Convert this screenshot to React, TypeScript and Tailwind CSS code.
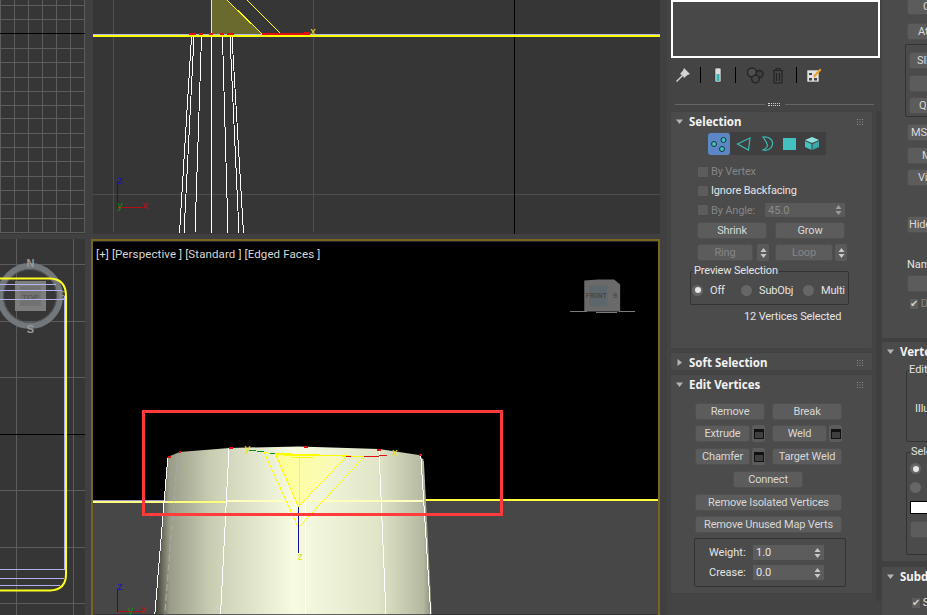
import React from 'react';

const uiFont = { fontFamily: 'Roboto, "Noto Sans", sans-serif' };

const Btn = ({ label, className = '', dim = false }: { label?: string; className?: string; dim?: boolean }) => (
  <div
    className={`flex h-[17px] shrink-0 items-center justify-center overflow-hidden rounded-[3px] border border-[#505050] bg-[#5c5c5c] text-[11px] leading-none tracking-[-0.15px] whitespace-nowrap ${
      dim ? 'text-[#858585]' : 'text-[#d8d8d8]'
    } ${className}`}
  >
    {label}
  </div>
);

const Caddy = () => (
  <div className="flex h-[17px] w-[13px] shrink-0 items-center justify-center rounded-[2px] bg-[#5c5c5c]">
    <div className="h-[10px] w-[10px] border border-t-[3px] border-[#111] bg-[#3f3f3f]" />
  </div>
);

const Arrows = ({ className = '' }: { className?: string }) => (
  <svg width="7" height="12" viewBox="0 0 7 12" className={className}>
    <path d="M3.5 1 L6.5 5 L.5 5 Z M3.5 11 L6.5 7 L.5 7 Z" fill="#c8c8c8" />
  </svg>
);

const Check = ({ label, dim, checked, className = '' }: { label: string; dim?: boolean; checked?: boolean; className?: string }) => (
  <div className={`flex h-[13px] items-center gap-[2px] text-[11px] leading-none tracking-[-0.15px] ${dim ? 'text-[#858585]' : 'text-[#e4e4e4]'} ${className}`}>
    <div className="flex h-[12px] w-[12px] items-center justify-center border border-[#4a4a4a] bg-[#5c5c5c]">
      {checked && <span className="text-[10px] leading-none text-[#cfcfcf]">✔</span>}
    </div>
    <span className="whitespace-nowrap">{label}</span>
  </div>
);

const Radio = ({ label, on, className = '' }: { label?: string; on?: boolean; className?: string }) => (
  <div className={`flex items-center gap-[2px] text-[11px] leading-none tracking-[-0.15px] text-[#e4e4e4] ${className}`}>
    <div className="flex h-[11px] w-[11px] items-center justify-center rounded-full bg-[#666]">
      {on && <div className="h-[6px] w-[6px] rounded-full bg-[#e8e8e8]" />}
    </div>
    {label && <span className="ml-[5px] whitespace-nowrap">{label}</span>}
  </div>
);

const Grip = () => (
  <svg width="6" height="6" viewBox="0 0 6 6" className="mr-[9px] ml-auto">
    {[0, 2.5, 5].map((x) =>
      [0, 2.5, 5].map((y) => <rect key={`${x}${y}`} x={x} y={y} width="1" height="1" fill="#8c8c8c" />),
    )}
  </svg>
);

const RolloutHead = ({ title, open = true, className = '' }: { title: string; open?: boolean; className?: string }) => (
  <div className={`flex h-[20px] items-center pl-[5px] ${className}`}>
    <svg width="8" height="8" viewBox="0 0 8 8" className="mr-[5px] shrink-0">
      {open ? <path d="M0 1.5 H7 L3.5 6 Z" fill="#b4b4b4" /> : <path d="M1.5 0 V7 L6 3.5 Z" fill="#b4b4b4" />}
    </svg>
    <span className="font-['Noto_Sans'] text-[11.5px] leading-none font-bold whitespace-nowrap text-[#f2f2f2]">{title}</span>
    <Grip />
  </div>
);

const Rollout = ({ children, className = '' }: { children: React.ReactNode; className?: string }) => (
  <div className={`shrink-0 rounded-[2px] border border-[#424242] bg-[#4b4b4b] ${className}`}>{children}</div>
);

const SubObjectIcons = () => (
  <div className="ml-[37px] flex h-[23px] w-[120px] items-center">
    <div className="flex h-[22px] w-[22px] items-center justify-center rounded-[3px] bg-[#5b87c5]">
      <svg width="18" height="16" viewBox="0 0 18 16">
        <circle cx="4" cy="8" r="2.5" fill="#43c0c0" stroke="#17333a" />
        <circle cx="13.5" cy="4" r="2.5" fill="#43c0c0" stroke="#17333a" />
        <circle cx="12" cy="13" r="2.5" fill="#43c0c0" stroke="#17333a" />
      </svg>
    </div>
    <div className="flex h-[23px] w-[96px] items-center justify-around bg-[#3f3f3f] px-[2px]">
      <svg width="16" height="14" viewBox="0 0 16 14" fill="none" stroke="#3db8b8" strokeWidth="1.2">
        <path d="M1.5 7 L14 1 L12.5 13 Z" />
      </svg>
      <svg width="14" height="15" viewBox="0 0 14 15" fill="none" stroke="#3db8b8" strokeWidth="1.2">
        <path d="M3 1 C10 0 14 5 12 10 C11 13 7 15 3 14 C7 12 8 10 7 8 C6.500 6 5 4 3 1 Z" />
      </svg>
      <div className="h-[12px] w-[13px] bg-[#43c0c0]" />
      <svg width="16" height="15" viewBox="0 0 16 15">
        <path d="M8 1 L15 4 L8 7 L1 4 Z" fill="#8fe0e0" />
        <path d="M1 5 L7.500 8 V14 L1 11 Z" fill="#43c0c0" />
        <path d="M15 5 L8.500 8 V14 L15 11 Z" fill="#3aa8a8" />
      </svg>
    </div>
  </div>
);

const CommandPanel = () => (
  <div className="flex h-full w-[214px] shrink-0 flex-col overflow-hidden bg-[#444444] pl-[3px]" style={uiFont}>
    <div className="ml-[1px] h-[58px] w-[209px] shrink-0 border-2 border-white bg-[#484848]" />
    <div className="mt-[7px] flex h-[20px] items-center">
      {/* pin */}
      <svg width="16" height="16" viewBox="0 0 16 16" className="ml-[5px]">
        <path d="M9 1 L15 7 L12.500 8 L9 11 L8 9 L2 15 L1 14 L7 8 L5 7 L8 3.500 Z" fill="#d4d4d4" />
      </svg>
      <div className="ml-[9px] h-[16px] w-[1px] bg-black" />
      <svg width="10" height="16" viewBox="0 0 10 16" className="ml-[12px]">
        <rect x="2" y="1" width="6" height="14" rx="1" fill="#dcdcdc" stroke="#333" strokeWidth=".6" />
        <rect x="3.500" y="7" width="3" height="7" fill="#33b5b5" />
      </svg>
      <div className="ml-[12px] h-[16px] w-[1px] bg-black" />
      <svg width="18" height="17" viewBox="0 0 18 17" fill="none" stroke="#232323" strokeWidth="1.3" className="ml-[10px]">
        <circle cx="6" cy="5.500" r="4.500" fill="#4f4f4f" />
        <circle cx="13.500" cy="7" r="3.500" fill="#3f3f3f" />
        <circle cx="9.500" cy="12" r="3.800" fill="#444" />
      </svg>
      <svg width="12" height="17" viewBox="0 0 12 17" fill="none" stroke="#222" strokeWidth="1.1" className="ml-[8px]">
        <path d="M1 3.500 H11 M4 3 V1.500 H8 V3 M2 4 V16 H10 V4 M4.500 6 V14 M7.500 6 V14" />
      </svg>
      <div className="ml-[12px] h-[16px] w-[1px] bg-black" />
      <svg width="16" height="16" viewBox="0 0 16 16" className="ml-[9px]">
        <rect x="1" y="3" width="12" height="12" fill="#e2e2e2" stroke="#444" strokeWidth=".6" />
        <path d="M3 6 H6 V8 H3 Z M8 11 H11 V13.500 H8 Z M3 11 H6 V13.500 H3 Z" fill="#444" />
        <path d="M7 9 L14 1.500 L15.500 3 L8.500 10.500 Z" fill="#f0a020" />
      </svg>
    </div>
    <div className="mt-[18px] flex h-[3px] items-center">
      <div className="ml-[5px] h-px w-[90px] bg-[#666]" />
      <div className="mx-[3px] h-[3px] w-[12px] border-y border-dotted border-[#cfcfcf]" />
      <div className="ml-[2px] h-px w-[89px] bg-[#666]" />
    </div>
    <div className="flex min-h-0 flex-1">
      <div className="w-[203px] shrink-0">
        <Rollout className="mt-[5px] h-[238px]">
          <RolloutHead title="Selection" />
          <SubObjectIcons />
          <Check label="By Vertex" dim className="mt-[10px] ml-[26px]" />
          <Check label="Ignore Backfacing" className="mt-[6px] ml-[26px]" />
          <div className="mt-[6px] ml-[26px] flex items-center">
            <Check label="By Angle:" dim className="w-[68px]" />
            <div className="flex h-[14px] w-[80px] items-center justify-between rounded-[1px] bg-[#5a5a5a] px-[3px] text-[11px] leading-none text-[#8a8a8a]">
              45.0
              <Arrows className="opacity-60" />
            </div>
          </div>
          <div className="mt-[5px] ml-[26px] flex gap-[8px]">
            <Btn label="Shrink" className="w-[70px]" />
            <Btn label="Grow" className="w-[70px]" />
          </div>
          <div className="mt-[5px] ml-[26px] flex">
            <Btn label="Ring" dim className="w-[56px]" />
            <div className="ml-[4px] flex h-[17px] w-[12px] items-center justify-center rounded-[2px] bg-[#5a5a5a]"><Arrows /></div>
            <Btn label="Loop" dim className="ml-[6px] w-[58px]" />
            <div className="ml-[2px] flex h-[17px] w-[12px] items-center justify-center rounded-[2px] bg-[#5a5a5a]"><Arrows /></div>
          </div>
          <div className="relative mt-[10px] ml-[19px] h-[34px] w-[159px] rounded-[2px] border border-[#333]">
            <span className="absolute -top-[8px] left-[2px] bg-[#4b4b4b] px-[1px] text-[11px] leading-[14px] tracking-[-0.15px] whitespace-nowrap text-[#e4e4e4]">
              Preview Selection
            </span>
            <div className="flex h-full items-center pt-[4px]">
              <Radio label="Off" on className="ml-[1px] w-[49px]" />
              <Radio label="SubObj" className="w-[62px]" />
              <Radio label="Multi" />
            </div>
          </div>
          <div className="mt-[5px] ml-[73px] text-[11px] leading-[14px] tracking-[-0.15px] whitespace-nowrap text-[#e4e4e4]">12 Vertices Selected</div>
        </Rollout>
        <Rollout className="mt-[3px] h-[19px]">
          <RolloutHead title="Soft Selection" open={false} className="h-[17px]" />
        </Rollout>
        <Rollout className="mt-[3px] h-[220px]">
          <RolloutHead title="Edit Vertices" />
          <div className="mt-[8px] ml-[24px] flex gap-[7px]">
            <Btn label="Remove" className="w-[70px]" />
            <Btn label="Break" className="w-[70px]" />
          </div>
          <div className="mt-[5px] ml-[24px] flex">
            <Btn label="Extrude" className="w-[55px]" />
            <div className="ml-[2px]"><Caddy /></div>
            <Btn label="Weld" className="ml-[7px] w-[55px]" />
            <div className="ml-[2px]"><Caddy /></div>
          </div>
          <div className="mt-[6px] ml-[24px] flex">
            <Btn label="Chamfer" className="w-[55px]" />
            <div className="ml-[2px]"><Caddy /></div>
            <Btn label="Target Weld" className="ml-[7px] w-[70px]" />
          </div>
          <Btn label="Connect" className="mt-[6px] ml-[62px] w-[70px]" />
          <Btn label="Remove Isolated Vertices" className="mt-[6px] ml-[24px] w-[147px]" />
          <Btn label="Remove Unused Map Verts" className="mt-[5px] ml-[24px] w-[147px]" />
          <div className="mt-[5px] ml-[23px] h-[49px] w-[152px] rounded-[2px] border border-[#333] pt-[6px]">
            <div className="flex h-[15px] items-center text-[11px] leading-none text-[#e4e4e4]">
              <span className="ml-[14px] w-[44px]">Weight:</span>
              <div className="flex h-[15px] w-[71px] items-center justify-between bg-[#5c5c5c] px-[3px]">1.0<Arrows /></div>
            </div>
            <div className="mt-[5px] flex h-[15px] items-center text-[11px] leading-none text-[#e4e4e4]">
              <span className="ml-[14px] w-[44px]">Crease:</span>
              <div className="flex h-[15px] w-[71px] items-center justify-between bg-[#5c5c5c] px-[3px]">0.0<Arrows /></div>
            </div>
          </div>
        </Rollout>
      </div>
      <div className="mt-[5px] ml-[3px] h-[490px] w-[5px] bg-[#3f3f3f]" />
    </div>
  </div>
);

const RightPanel = () => (
  <div className="flex h-full min-w-0 flex-1 flex-col overflow-hidden bg-[#404040] pl-[1px] whitespace-nowrap" style={uiFont}>
    <div className="h-[338px] shrink-0 bg-[#4b4b4b] pl-[25px]">
      <Btn label="C" className="-mt-[2px] w-[40px] !justify-start pl-[15px]" />
      <Btn label="At" className="mt-[8px] w-[40px] !justify-start pl-[10px]" />
      <div className="mt-[4px] -ml-[2px] h-[73px] w-[40px] rounded-[2px] border border-[#333] pl-[3px]">
        <Btn label="Sli" className="mt-[7px] w-[40px] !justify-start pl-[7px]" />
        <Btn className="mt-[6px] w-[40px]" />
        <Btn label="Q" className="mt-[5px] w-[40px] !justify-start pl-[9px]" />
      </div>
      <Btn label="MSm" className="mt-[7px] w-[40px] !justify-start pl-[3px]" />
      <Btn label="M" className="mt-[6px] w-[40px] !justify-start pl-[14px]" />
      <Btn label="Vi" className="mt-[5px] w-[40px] !justify-start pl-[10px]" />
      <Btn label="Hide" className="mt-[30px] w-[40px] !justify-start pl-[1px]" />
      <div className="mt-[25px] text-[11px] leading-[14px] text-[#e4e4e4]">Nam</div>
      <Btn className="mt-[3px] w-[40px]" />
      <Check label="D" dim checked className="mt-[5px] ml-[2px]" />
    </div>
    <Rollout className="mt-[4px] h-[219px] !border-0">
      <RolloutHead title="Vertex Properties" />
      <div className="relative mt-[8px] ml-[24px] h-[72px] w-[40px] rounded-[2px] border border-[#333]">
        <span className="absolute -top-[8px] left-[2px] bg-[#4b4b4b] text-[11px] leading-[14px] text-[#e4e4e4]">Edit</span>
        <span className="absolute top-[31px] left-[8px] text-[11px] leading-[14px] text-[#e4e4e4]">Illu</span>
      </div>
      <div className="relative mt-[10px] ml-[24px] h-[103px] w-[40px] rounded-[2px] border border-[#333] pl-[3px]">
        <span className="absolute -top-[8px] left-[3px] bg-[#4b4b4b] px-[1px] text-[11px] leading-[14px] text-[#e4e4e4]">Sele</span>
        <Radio on className="mt-[10px]" />
        <Radio className="mt-[8px]" />
        <div className="mt-[8px] h-[13px] w-[30px] border border-black bg-white" />
        <Btn className="mt-[7px] w-[40px]" />
      </div>
    </Rollout>
    <Rollout className="mt-[6px] h-[60px] !border-0">
      <RolloutHead title="Subdivision Surface" />
      <Check label="S" checked className="mt-[9px] ml-[29px]" />
    </Rollout>
  </div>
);

const Line = ({ d, c = 'white', w = 1 }: { d: string; c?: string; w?: number }) => (
  <path d={d} fill="none" stroke={c} strokeWidth={w} shapeRendering="crispEdges" />
);

const Label = ({ x, y, c, t }: { x: number; y: number; c: string; t: string }) => (
  <text x={x} y={y} fill={c} fontSize="11" textAnchor="middle" fontFamily='"Liberation Sans", sans-serif'>{t}</text>
);

const LeftTopView = () => (
  <svg viewBox="0 0 85 234" className="h-full w-full">
    {[0, 14, 28, 42, 56, 70, 84].map((x) => <Line key={x} d={`M${x + 0.5} 0 V232`} c="#5c5c5c" />)}
    {[5, 19, 48, 62, 77, 91, 105, 118, 133, 147, 161, 176, 190, 204, 218, 232].map((y) => <Line key={y} d={`M0 ${y + 0.5} H85`} c="#5c5c5c" />)}
    <Line d="M0 33.5 H85" c="#000" />
  </svg>
);

const TopView = () => (
  <svg viewBox="93 0 567 234" className="h-full w-full">
    <Line d="M113.500 0 V232 M313.500 0 V232" c="#4e4e4e" />
    <Line d="M93 194.500 H660" c="#4e4e4e" />
    <Line d="M514.500 0 V234" c="#000" />
    <path d="M212 0 H227 L262 34 H212 Z" fill="#6b6a2e" />
    <Line d="M211.500 0 V35" c="#ffff00" />
    <Line d="M227 0 L262 34 M247 0 L281 34" c="#ffff00" />
    <Line d="M93 34 H660" c="#b7b7e8" />
    <Line d="M262 34 H310" c="#e01010" w={2} />
    <Line d="M189 33.500 H196 M199 33.500 H203 M209 33.500 H213 M220 33.500 H224 M227 33.500 H234 M304 33 H310" c="#e01010" w={2} />
    <Line d="M93 36 H660" c="#ffff00" w={2} />
    {[
      'M191.500 37 L179.500 233',
      'M194 37 L184 233',
      'M201.500 37 L195 233',
      'M211.500 37 V233',
      'M222.500 37 L228 233',
      'M230 37 L239 233',
      'M232 37 L243.500 233',
    ].map((d) => <Line key={d} d={d} />)}
    <Label x={313} y={35} c="#e0e020" t="x" />
    <Line d="M117.500 181 V207" c="#1010b0" />
    <Line d="M118 207.500 H143" c="#b01010" />
    <Label x={120} y={184} c="#1515c0" t="z" />
    <Label x={120} y={209} c="#109010" t="y" />
    <Label x={145} y={209} c="#c01010" t="x" />
  </svg>
);

const LeftBottomView = () => (
  <svg viewBox="0 239 85 376" className="h-full w-full">
    {[16, 73].map((x) => <Line key={x} d={`M${x + 0.5} 239 V615`} c="#5c5c5c" />)}
    {[264, 321, 377, 490, 547, 603].map((y) => <Line key={y} d={`M0 ${y + 0.5} H85`} c="#5c5c5c" />)}
    <Line d="M0 434.500 H85" c="#000" />
    <circle cx="30" cy="296" r="30" fill="none" stroke="#72777c" strokeWidth="6" />
    <circle cx="30" cy="296" r="26.500" fill="none" stroke="#5a5a5a" strokeWidth="1" />
    <rect x="15" y="281" width="31" height="30" fill="#7d7d7d" />
    <rect x="20" y="286" width="21" height="20" fill="#727272" />
    <text x="30.500" y="300" fill="#585858" fontSize="8" fontWeight="bold" textAnchor="middle" fontFamily='"Liberation Sans", sans-serif'>TOP</text>
    <text x="30.500" y="267" fill="#9a9a9a" fontSize="11" fontWeight="bold" textAnchor="middle" fontFamily='"Liberation Sans", sans-serif'>N</text>
    <text x="30.500" y="333" fill="#9a9a9a" fontSize="11" fontWeight="bold" textAnchor="middle" fontFamily='"Liberation Sans", sans-serif'>S</text>
    <text x="62" y="299" fill="#8a8a8a" fontSize="10" fontWeight="bold" textAnchor="middle" fontFamily='"Liberation Sans", sans-serif'>E</text>
    <path d="M0 284.500 H56 M0 290.500 H62 M0 299.500 H64 M0 569.500 H64 M0 578.500 H64 M0 585.500 H60" stroke="#b0b0ee" fill="none" strokeWidth="1" shapeRendering="crispEdges" />
    <path d="M64.500 296 V570" stroke="#b0b0ee" fill="none" />
    <path d="M0 278.500 H50 Q66 279 66 296 V574 Q66 590 50 590.500 H0" fill="none" stroke="#ffff20" strokeWidth="2" />
  </svg>
);

const PerspectiveView = () => (
  <svg viewBox="93 241 567 374" className="h-full w-full">
    <defs>
      <linearGradient id="body" x1="156" x2="433" y1="0" y2="0" gradientUnits="userSpaceOnUse">
        <stop offset="0" stopColor="#3c3c34" />
        <stop offset=".05" stopColor="#9a9c88" />
        <stop offset=".2" stopColor="#c9cdb2" />
        <stop offset=".5" stopColor="#f7fbe2" />
        <stop offset=".8" stopColor="#e2e6c8" />
        <stop offset=".97" stopColor="#b4b8a0" />
        <stop offset="1" stopColor="#8a8c78" />
      </linearGradient>
      <linearGradient id="glow" x1="276" x2="347" y1="0" y2="0" gradientUnits="userSpaceOnUse">
        <stop offset="0" stopColor="#ffff80" stopOpacity=".8" />
        <stop offset="1" stopColor="#ffffb0" stopOpacity=".6" />
      </linearGradient>
    </defs>
    <rect x="93" y="241" width="567" height="374" fill="#000" />
    <rect x="93" y="501" width="567" height="114" fill="#474747" />
    {/* viewcube */}
    <path d="M586 280 L600 279 H616 L622 284 V311 H586 Z" fill="#6a6a6a" />
    <rect x="591" y="285" width="18" height="21" fill="#5d666b" />
    <text x="598" y="298" fill="#3c3c3c" fontSize="7" textAnchor="middle" fontFamily='"Liberation Mono", monospace'>FRONT</text>
    <text x="617" y="298" fill="#3c3c3c" fontSize="7" textAnchor="middle" fontFamily='"Liberation Mono", monospace'>0</text>
    <Line d="M572 311.500 H589 M598 312 H619 M621 311.500 H637" c="#7a7a7a" />
    {/* horizon, right side */}
    <Line d="M425 499.500 H660" c="#b7b7e8" />
    <Line d="M425 500.500 H660" c="#ffff40" w={2} />
    <Line d="M93 500.500 H165" c="#9a9ac8" />
    {/* cylinder */}
    <path d="M168 457 L180 452 L230 448 L300 446.500 L380 449 L420 455 L425 460 L433 615 H156 Z" fill="url(#body)" />
    <Line d="M93 502.500 H226" c="#ffff80" w={2} />
    <Line d="M226 501.500 H425" c="#ffffc0" w={2} />
    <Line d="M168 458 L155 615" c="#fff" />
    <path d="M178 455 L165 615" stroke="#a8a8a8" strokeWidth="1.200" strokeDasharray="7 3" fill="none" />
    <Line d="M229.500 448 L221 615 M306.500 500 V615 M380 450 L387 615 M422 456 L432 615" />
    {/* gizmo */}
    <path d="M276 454 L347 457 L299 507 Z" fill="url(#glow)" />
    <Line d="M265 453 L365 457 L299 528 Z M276 454 L299 507 L347 457" c="#ffff00" />
    <Line d="M276 454.500 H320 M285 456 H350 M292 458 H315" c="#ffff00" />
    <Line d="M300.500 458 V507" c="#ffff00" />
    <Line d="M299.500 507 V553" c="#1010a0" />
    <Line d="M250 450.500 H257 M258 452 H265 M271 454 H276" c="#109010" />
    <Line d="M347 456.500 H352 M365 456.500 H380 M380 455.500 H388" c="#e01010" />
    <Line d="M179 452 H181 M229 448 H233 M305 447 H309 M378 450 H382 M420 455 H423 M168 457 H171 M424 460 H425" c="#e01010" w={2} />
    <Label x={248} y={452} c="#e4e420" t="y" />
    <Label x={396} y={456} c="#e4e420" t="x" />
    <Label x={301} y={560} c="#e4e420" t="z" />
    {/* origin axes */}
    <Line d="M117.500 590 V613" c="#1010b0" />
    <Line d="M118 612.500 H141" c="#b01010" />
    <Label x={120} y={591} c="#1515c0" t="z" />
    <Label x={131} y={615} c="#109010" t="y" />
    <Label x={144} y={614} c="#c01010" t="x" />
  </svg>
);

export default function App() {
  return (
    <div className="flex h-[615px] w-[927px] overflow-hidden bg-[#404040]">
      <div className="flex h-full w-[667px] shrink-0 flex-col gap-[5px] bg-[#404040] pr-[7px]">
        <div className="flex h-[234px] shrink-0 gap-[8px]">
          <div className="h-full w-[85px] shrink-0 bg-[#363636]"><LeftTopView /></div>
          <div className="min-w-0 flex-1 bg-[#363636]"><TopView /></div>
        </div>
        <div className="flex min-h-0 flex-1 gap-[6px]">
          <div className="h-full w-[85px] shrink-0 bg-[#363636]"><LeftBottomView /></div>
          <div className="relative min-w-0 flex-1 border-2 border-b-0 border-[#7a6520]">
            <PerspectiveView />
            <div
              className="absolute top-[5px] left-[3px] text-[11.5px] leading-[16px] tracking-[0.11px] whitespace-nowrap text-[#d8d8d8]"
              style={uiFont}
            >
              [+] [Perspective ] [Standard ] [Edged Faces ]
            </div>
            <div className="absolute top-[169px] left-[49px] h-[106px] w-[361px] border-[3px] border-[#ff3b3b]" />
          </div>
        </div>
      </div>
      <CommandPanel />
      <RightPanel />
    </div>
  );
}
